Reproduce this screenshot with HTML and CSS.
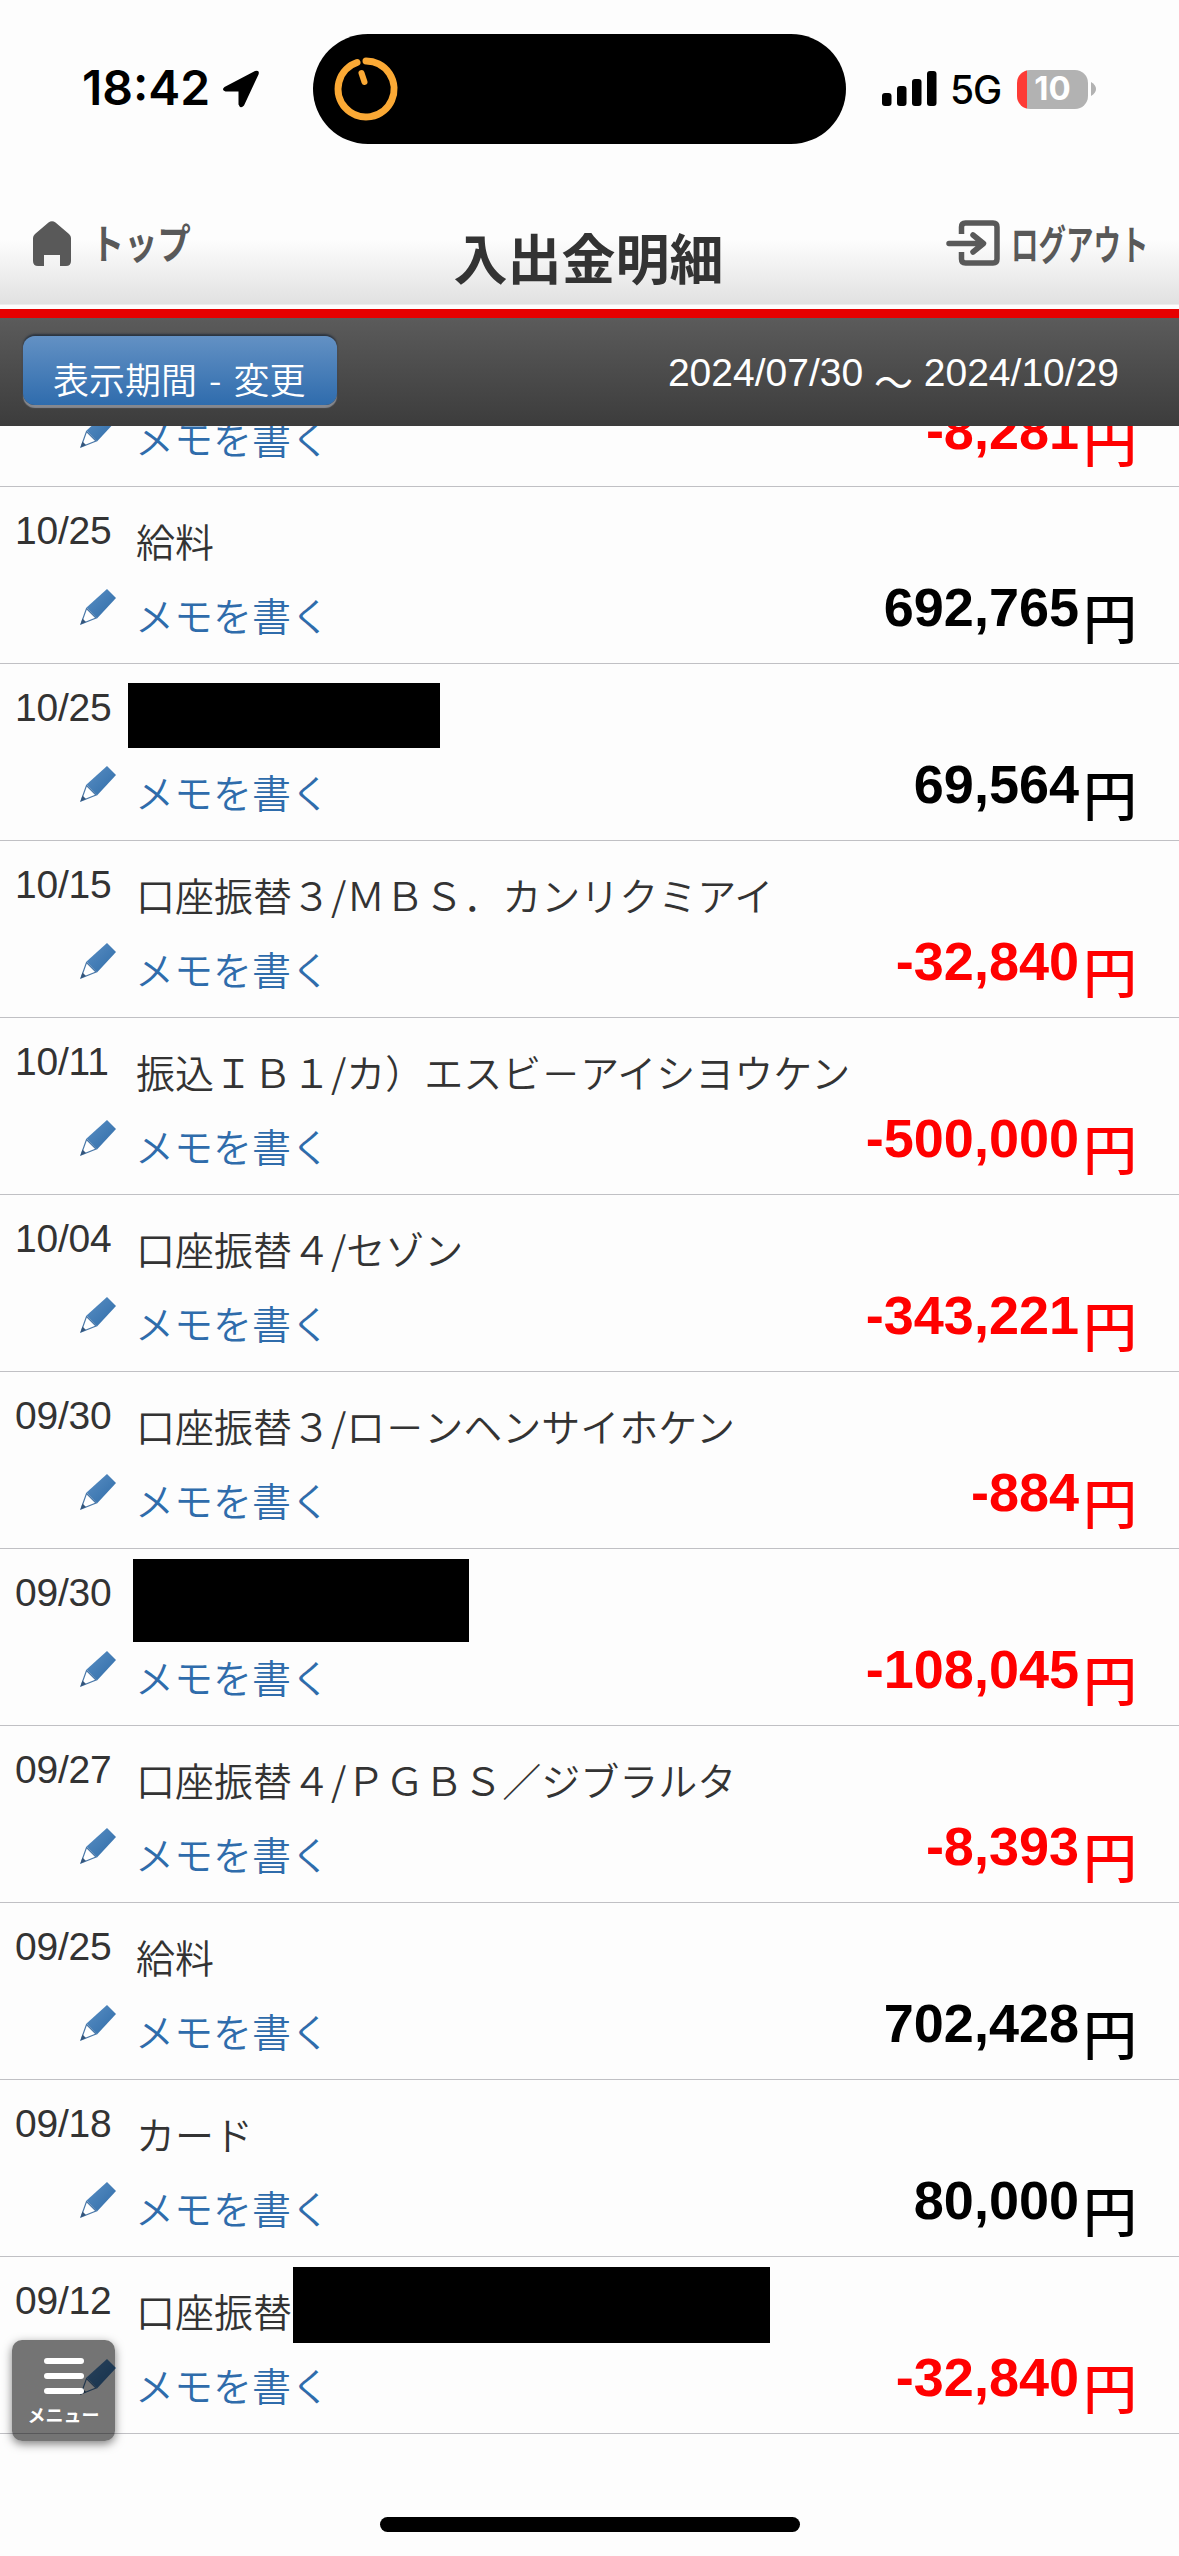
FILE: index.html
```html
<!DOCTYPE html>
<html lang="ja">
    <head>
        <title>入出金明細</title>
        <meta charset="utf-8" />
        <link rel="stylesheet" href="styles.css">
    </head>

    <body>
        <!-- shared pencil icon -->
        <svg class="defs" width="0" height="0">
            <defs>
                <linearGradient id="pencilFill" x1="0" y1="0" x2="1" y2="1">
                    <stop offset="0" stop-color="#5a8fc4" />
                    <stop offset="1" stop-color="#2f6ca8" />
                </linearGradient>
                <symbol id="pencil" viewBox="0 0 36 36">
                    <path d="M27 0L36 9L17 29.500L6.500 18.500Z" fill="url(#pencilFill)" />
                    <path d="M6.500 19.500L16 29L1 35Z" fill="#fff" stroke="#4a78a8" stroke-width="1.200" />
                    <path d="M0.500 35.500L2.500 29.500L6 33Z" fill="#35567c" />
                </symbol>
            </defs>
        </svg>

        <div class="statusBar">
            <div class="clock">18:42</div>
            <svg class="arrow" width="38" height="38" viewBox="0 0 38 38">
                <path d="M2.500 17L33 1Q38-0.500 36.500 4.500L22 35.500Q18.500 39.500 16.500 34.500V21.500H3.500Q-1 20 2.500 17Z" />
            </svg>
            <div class="island">
                <svg width="66" height="66" viewBox="0 0 66 66" fill="none" stroke="#fba935" stroke-width="7" stroke-linecap="round">
                    <path d="M33 5A28 28 0 1 1 24 6.500" />
                    <path d="M28.500 17L31.500 26" stroke-width="6" />
                </svg>
            </div>
            <svg class="signal" width="55" height="36" viewBox="0 0 55 36">
                <rect x="0" y="22" width="9.500" height="13" rx="3" />
                <rect x="15" y="15" width="9.500" height="20" rx="3" />
                <rect x="30" y="8" width="9.500" height="27" rx="3" />
                <rect x="45" y="0" width="9.500" height="35" rx="3" />
            </svg>
            <div class="network">5G</div>
            <div class="battery">10</div>
            <svg class="tip" width="5" height="14" viewBox="0 0 5 14">
                <path d="M0 0Q5 3 5 7T0 14Z" fill="#b2b2b2" />
            </svg>
        </div>

        <div class="header">
            <div class="home">
                <svg width="38" height="45" viewBox="0 0 38 45">
                    <path d="M15.500 1.500Q19-1 22.500 1.500L36 13Q38 15 38 17V40Q38 45 33 45H27V34H11V45H5Q0 45 0 40V17Q0 15 2 13Z" fill="#595959" />
                </svg>
                <span class="label">トップ</span>
            </div>
            <h1>入出金明細</h1>
            <div class="logout">
                <svg width="54" height="46" viewBox="0 0 54 46" fill="none" stroke="#595959" stroke-width="5.500" stroke-linecap="round" stroke-linejoin="round">
                    <path d="M15.500 14V7Q15.500 3 19.500 3H47Q51 3 51 7V39Q51 43 47 43H19.500Q15.500 43 15.500 39V32" stroke-linecap="butt" />
                    <path d="M3 23.500H37M27 15L37.500 23.500L27 32" />
                </svg>
                <span class="label">ログアウト</span>
            </div>
        </div>

        <div class="period">
            <div class="periodBtn">表示期間 - 変更</div>
            <div class="range">2024/07/30 <span class="wave">～</span> 2024/10/29</div>
        </div>

        <div class="list">
            <div class="item first">
                <div class="top"><div class="date"></div><div class="name"></div></div>
                <div class="bottom"><svg class="pencil"><use href="#pencil" /></svg><div class="memo">メモを書く</div><div class="amount minus">-8,281<span class="yen">円</span></div></div>
            </div>
            <div class="item">
                <div class="top"><div class="date">10/25</div><div class="name">給料</div></div>
                <div class="bottom"><svg class="pencil"><use href="#pencil" /></svg><div class="memo">メモを書く</div><div class="amount">692,765<span class="yen">円</span></div></div>
            </div>
            <div class="item">
                <div class="top"><div class="date">10/25</div><div class="name"></div></div>
                <div class="mask maskA"></div>
                <div class="bottom"><svg class="pencil"><use href="#pencil" /></svg><div class="memo">メモを書く</div><div class="amount">69,564<span class="yen">円</span></div></div>
            </div>
            <div class="item">
                <div class="top"><div class="date">10/15</div><div class="name">口座振替３/ＭＢＳ．カンリクミアイ</div></div>
                <div class="bottom"><svg class="pencil"><use href="#pencil" /></svg><div class="memo">メモを書く</div><div class="amount minus">-32,840<span class="yen">円</span></div></div>
            </div>
            <div class="item">
                <div class="top"><div class="date">10/11</div><div class="name">振込ＩＢ１/カ）エスビ－アイシヨウケン</div></div>
                <div class="bottom"><svg class="pencil"><use href="#pencil" /></svg><div class="memo">メモを書く</div><div class="amount minus">-500,000<span class="yen">円</span></div></div>
            </div>
            <div class="item">
                <div class="top"><div class="date">10/04</div><div class="name">口座振替４/セゾン</div></div>
                <div class="bottom"><svg class="pencil"><use href="#pencil" /></svg><div class="memo">メモを書く</div><div class="amount minus">-343,221<span class="yen">円</span></div></div>
            </div>
            <div class="item">
                <div class="top"><div class="date">09/30</div><div class="name">口座振替３/ロ－ンヘンサイホケン</div></div>
                <div class="bottom"><svg class="pencil"><use href="#pencil" /></svg><div class="memo">メモを書く</div><div class="amount minus">-884<span class="yen">円</span></div></div>
            </div>
            <div class="item">
                <div class="top"><div class="date">09/30</div><div class="name"></div></div>
                <div class="mask maskB"></div>
                <div class="bottom"><svg class="pencil"><use href="#pencil" /></svg><div class="memo">メモを書く</div><div class="amount minus">-108,045<span class="yen">円</span></div></div>
            </div>
            <div class="item">
                <div class="top"><div class="date">09/27</div><div class="name">口座振替４/ＰＧＢＳ／ジブラルタ</div></div>
                <div class="bottom"><svg class="pencil"><use href="#pencil" /></svg><div class="memo">メモを書く</div><div class="amount minus">-8,393<span class="yen">円</span></div></div>
            </div>
            <div class="item">
                <div class="top"><div class="date">09/25</div><div class="name">給料</div></div>
                <div class="bottom"><svg class="pencil"><use href="#pencil" /></svg><div class="memo">メモを書く</div><div class="amount">702,428<span class="yen">円</span></div></div>
            </div>
            <div class="item">
                <div class="top"><div class="date">09/18</div><div class="name">カード</div></div>
                <div class="bottom"><svg class="pencil"><use href="#pencil" /></svg><div class="memo">メモを書く</div><div class="amount">80,000<span class="yen">円</span></div></div>
            </div>
            <div class="item">
                <div class="top"><div class="date">09/12</div><div class="name">口座振替</div></div>
                <div class="mask maskC"></div>
                <div class="bottom"><svg class="pencil"><use href="#pencil" /></svg><div class="memo">メモを書く</div><div class="amount minus">-32,840<span class="yen">円</span></div></div>
            </div>
        </div>

        <div class="menuBtn">
            <div class="line"></div>
            <div class="line"></div>
            <div class="line"></div>
            <div class="menuText">メニュー</div>
        </div>
        <div class="homeIndicator"></div>
    </body>
</html>
```
FILE: styles.css
```css
* {
    box-sizing: border-box;
}

body {
    margin: 0;
    width: 1179px;
    height: 2556px;
    position: relative;
    overflow: hidden;
    background-color: #fdfdfd;
    color: #333;
    font-family: "Liberation Sans", "Noto Sans CJK JP", sans-serif;
}

svg {
    display: block;
    flex: none;
}

.defs {
    position: absolute;
}

/* status bar */
.statusBar {
    height: 183px;
    padding: 34px 0 39px 82px;
    display: flex;
    align-items: center;
    color: #000;
    font-family: Inter, sans-serif;
}

.clock {
    width: 140px;
    font-size: 48px;
    font-weight: 600;
    line-height: 54px;
    padding-bottom: 2px;
}

.island {
    width: 533px;
    height: 110px;
    margin-left: 53px;
    padding-left: 20px;
    border-radius: 55px;
    background-color: #000;
    display: flex;
    align-items: center;
}

.signal {
    margin-left: 36px;
}

.network {
    width: 66px;
    margin-left: 13px;
    margin-right: 1px;
    font-size: 39px;
    font-weight: 500;
    line-height: 44px;
    letter-spacing: -1px;
    padding-top: 1px;
}

.battery {
    width: 71px;
    height: 39px;
    border-radius: 13px;
    background: linear-gradient(to right, #fd3b36 10px, #b2b2b2 10px);
    color: #fff;
    font-size: 33px;
    font-weight: 700;
    line-height: 37px;
    text-align: center;
}

.tip {
    margin-left: 3px;
}

/* page header */
.header {
    height: 135px;
    padding: 0 32px 0 33px;
    display: flex;
    justify-content: space-between;
    border-bottom: 9px solid #e60000;
    background: linear-gradient(to bottom, #fdfdfd 45%, #e1e1e1 96%, #fdfdfd 97%);
    font-family: "Noto Sans CJK JP", sans-serif;
}

.home, .logout {
    width: 201px;
    height: 46px;
    margin-top: 37px;
    display: flex;
    align-items: center;
}

.home {
    width: 198px;
}

.label {
    color: #595959;
    font-size: 41px;
    font-weight: 700;
    line-height: 46px;
    white-space: nowrap;
    transform-origin: left;
}

.home .label {
    margin: -5px 0 0 20px;
    transform: scaleX(0.81);
}

.logout .label {
    margin: -2px 0 0 11px;
    transform: scaleX(0.67);
}

h1 {
    margin: 46px 0 0;
    font-size: 54px;
    font-weight: 700;
    line-height: 56px;
}

/* period bar */
.period {
    height: 108px;
    padding: 18px 60px 0 23px;
    display: flex;
    justify-content: space-between;
    background: linear-gradient(to bottom, #5b5b5b, #3c3c3c);
    color: #fff;
}

.periodBtn {
    width: 314px;
    height: 69px;
    padding: 8px 0 0 30px;
    border-radius: 12px;
    background: linear-gradient(to bottom, #6391c4, #2f6cad);
    box-shadow: 0 -2px 2px #2b3440, 0 3px 1px #85888f;
    font-family: "Noto Sans CJK JP", sans-serif;
    font-size: 36px;
    font-weight: 350;
    line-height: 68px;
    word-spacing: 4px;
    white-space: nowrap;
}

.range {
    font-size: 39px;
    line-height: 74px;
    white-space: nowrap;
}

.wave {
    display: inline-block;
    transform: translateY(11px);
}

/* statement list */
.list {
    overflow: hidden;
}

.item {
    height: 177px;
    position: relative;
    border-bottom: 1px solid #c0c0c4;
}

.first {
    margin-top: -116px;
}

.top {
    height: 88px;
    padding-left: 15px;
    display: flex;
}

.date {
    width: 121px;
    padding-top: 22px;
    font-size: 39px;
    line-height: 44px;
    letter-spacing: -0.2px;
}

.name {
    padding-top: 30px;
    font-family: "Noto Sans CJK JP", sans-serif;
    font-size: 39px;
    font-weight: 350;
    line-height: 46px;
    white-space: nowrap;
}

.bottom {
    height: 87px;
    padding: 0 42px 0 80px;
    display: flex;
}

.pencil {
    width: 36px;
    height: 36px;
    margin-top: 14px;
}

.memo {
    margin: 16px auto 0 19px;
    color: #2f6cab;
    font-family: "Noto Sans CJK JP", sans-serif;
    font-size: 39px;
    font-weight: 350;
    line-height: 46px;
}

.amount {
    display: flex;
    color: #000;
    font-size: 54px;
    font-weight: 700;
    line-height: 64px;
}

.minus {
    color: #f00;
}

.yen {
    margin: 10px 0 0 4px;
    font-family: "Noto Sans CJK JP", sans-serif;
    font-weight: 500;
}

.mask {
    position: absolute;
    background-color: #000;
}

.maskA {
    left: 128px;
    top: 19px;
    width: 312px;
    height: 65px;
}

.maskB {
    left: 133px;
    top: 10px;
    width: 336px;
    height: 83px;
}

.maskC {
    left: 293px;
    top: 10px;
    width: 477px;
    height: 76px;
}

/* floating menu */
.menuBtn {
    position: absolute;
    left: 12px;
    top: 2340px;
    width: 103px;
    height: 101px;
    padding-top: 18px;
    border-radius: 10px;
    background-color: rgba(0, 0, 0, 0.54);
    box-shadow: 0 3px 10px rgba(0, 0, 0, 0.5);
}

.line {
    width: 40px;
    height: 6px;
    margin: 0 auto 9px;
    border-radius: 3px;
    background-color: #fff;
}

.menuText {
    color: #fff;
    font-family: "Noto Sans CJK JP", sans-serif;
    font-size: 18px;
    font-weight: 700;
    line-height: 22px;
    text-align: center;
}

.homeIndicator {
    position: absolute;
    left: 380px;
    top: 2517px;
    width: 420px;
    height: 15px;
    border-radius: 8px;
    background-color: #000;
}
```
